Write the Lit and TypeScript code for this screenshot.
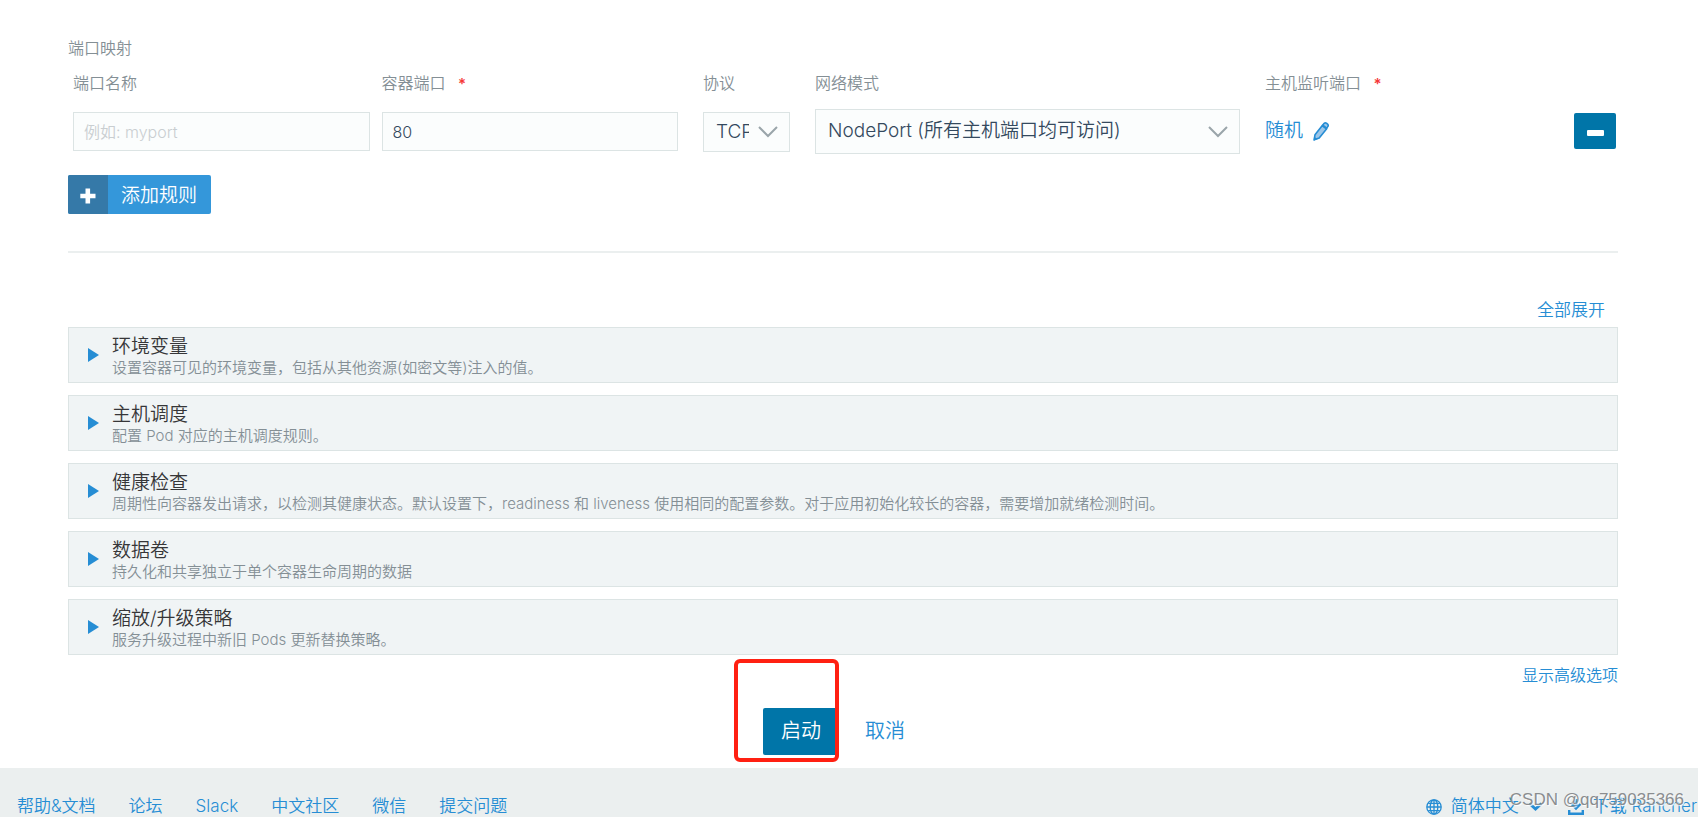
import { LitElement, html, css } from "lit";
import { customElement, property } from "lit/decorators.js";

const chevron = html`<svg class="chevron" width="20" height="12" viewBox="0 0 20 12" aria-hidden="true">
  <path d="M1 1 L10 10 L19 1" fill="none" stroke="#9aa5aa" stroke-width="2" />
</svg>`;

interface Section {
  title: string;
  detail: string;
}

const SECTIONS: Section[] = [
  { title: "环境变量", detail: "设置容器可见的环境变量，包括从其他资源(如密文等)注入的值。" },
  { title: "主机调度", detail: "配置 Pod 对应的主机调度规则。" },
  {
    title: "健康检查",
    detail:
      "周期性向容器发出请求，以检测其健康状态。默认设置下，readiness 和 liveness 使用相同的配置参数。对于应用初始化较长的容器，需要增加就绪检测时间。",
  },
  { title: "数据卷", detail: "持久化和共享独立于单个容器生命周期的数据" },
  { title: "缩放/升级策略", detail: "服务升级过程中新旧 Pods 更新替换策略。" },
];

const LINKS = ["帮助&文档", "论坛", "Slack", "中文社区", "微信", "提交问题"];

@customElement("accordion-item")
class AccordionItem extends LitElement {
  @property() heading = "";
  @property() detail = "";

  static styles = css`
    :host {
      display: block;
    }
    .panel {
      display: flex;
      align-items: center;
      gap: 13px;
      width: 100%;
      height: 56px;
      box-sizing: border-box;
      padding: 0 19px;
      border: 1px solid #dce4e4;
      background: #f0f4f5;
      font: inherit;
      text-align: left;
      cursor: pointer;
    }
    .arrow {
      flex: none;
    }
    .text {
      display: flex;
      flex-direction: column;
      min-width: 0;
      padding-top: 4px;
    }
    .title {
      font-size: 19px;
      line-height: 22px;
      color: #363638;
    }
    .detail {
      font-size: 15px;
      line-height: 20px;
      color: #848f95;
    }
  `;

  render() {
    return html`<button class="panel" type="button" aria-expanded="false">
      <svg class="arrow" width="11" height="14" viewBox="0 0 11 14" aria-hidden="true">
        <path d="M0 0 L11 7 L0 14Z" fill="#268dd4" />
      </svg>
      <span class="text">
        <span class="title">${this.heading}</span>
        <span class="detail">${this.detail}</span>
      </span>
    </button>`;
  }
}

@customElement("app-root")
class AppRoot extends LitElement {
  static styles = css`
    :host {
      display: block;
      background: #fff;
      color: #848f95;
      font-family: Inter, "Noto Sans CJK SC", sans-serif;
      font-weight: 350;
      font-size: 16px;
      line-height: 24px;
      overflow: hidden;
    }
    a {
      color: #268dd4;
      text-decoration: none;
    }
    button,
    input,
    select {
      font: inherit;
      margin: 0;
      box-sizing: border-box;
    }
    main {
      padding: 36px 80px 13px 68px;
    }
    h2 {
      margin: 0;
      font: inherit;
    }
    .rule {
      display: grid;
      grid-template-columns: minmax(0, 605fr) 87px minmax(0, 425fr) minmax(0, 284fr) 42px;
      grid-template-rows: 24px 45px;
      gap: 14px 25px;
      align-items: center;
      padding: 11px 2px 0 5px;
    }
    .pair {
      display: grid;
      grid-template-columns: 1fr 1fr;
      gap: 12px;
    }
    .required {
      color: #f53737;
      margin-left: 8px;
      font-weight: 600;
      font-size: 15px;
    }
    .field {
      width: 100%;
      height: 39px;
      padding: 0 10px;
      border: 1px solid #dce4e4;
      border-radius: 0;
      background: #fbfdfd;
      color: #34495e;
      font-size: 16px;
    }
    .field::placeholder {
      color: #c9ced1;
      opacity: 1;
    }
    .select {
      display: grid;
      align-items: center;
    }
    .select > * {
      grid-area: 1 / 1;
    }
    .select select {
      appearance: none;
      width: 100%;
      height: 45px;
      padding: 0 40px 1px 12px;
      border: 1px solid #dce4e4;
      border-radius: 0;
      background: #fbfdfd;
      color: #34495e;
      font-size: 19px;
    }
    .select .small {
      height: 40px;
      padding: 1px 40px 0 12px;
      text-overflow: clip;
      overflow: hidden;
    }
    .chevron {
      justify-self: end;
      margin-right: 12px;
      pointer-events: none;
    }
    .random {
      display: flex;
      align-items: center;
      gap: 10px;
      padding-bottom: 1px;
      font-size: 19px;
    }
    .remove {
      display: grid;
      place-items: center;
      width: 42px;
      height: 36px;
      margin-bottom: 2px;
      padding: 4px 0 0;
      border: 0;
      border-radius: 2px;
      background: #0075a8;
    }
    .add {
      display: flex;
      align-items: stretch;
      height: 39px;
      margin-top: 21px;
      padding: 0;
      border: 0;
      border-radius: 2px;
      overflow: hidden;
      background: #3497da;
      color: #fff;
      font-size: 19px;
      line-height: 42px;
    }
    .plus {
      display: grid;
      place-items: center;
      width: 40px;
      padding-top: 2px;
      box-sizing: border-box;
      background: #3579a8;
    }
    .label {
      padding: 0 14px 0 13px;
    }
    hr {
      height: 2px;
      margin: 37px 0 45px;
      border: 0;
      background: #ebefef;
    }
    .expand {
      display: flex;
      justify-content: flex-end;
      padding: 0 13px 5px 0;
      font-size: 17px;
    }
    .sections {
      display: grid;
      gap: 12px;
    }
    .advanced {
      display: flex;
      justify-content: flex-end;
      padding-top: 8px;
    }
    .actions {
      display: flex;
      justify-content: center;
      gap: 8px;
      padding-top: 21px;
      font-size: 20px;
      line-height: 47px;
    }
    .launch-wrap {
      position: relative;
    }
    .launch {
      display: block;
      height: 47px;
      padding: 0 18px;
      border: 0;
      border-radius: 2px;
      background: #0075a8;
      color: #fff;
    }
    .cancel {
      padding: 0 18px;
    }
    .highlight {
      position: absolute;
      right: 0;
      bottom: -7px;
      width: 105px;
      height: 103px;
      box-sizing: border-box;
      border: 4px solid #ff2012;
      border-radius: 6px;
      pointer-events: none;
    }
    footer {
      position: relative;
      display: flex;
      justify-content: space-between;
      padding: 28px 1px 0 17px;
      background: #ebefef;
      font-size: 17px;
      line-height: 21px;
      white-space: nowrap;
    }
    footer nav {
      display: flex;
      gap: 33px;
    }
    .tools {
      display: flex;
      gap: 25px;
    }
    .tools a {
      display: flex;
      align-items: center;
      gap: 9px;
    }
    .watermark {
      position: absolute;
      right: 14px;
      top: 21px;
      font-family: "Liberation Sans", sans-serif;
      font-weight: 400;
      color: #8a8d8f;
      text-shadow: 1px 1px 1px #fff;
    }
  `;

  render() {
    return html`
      <main>
        <h2>端口映射</h2>
        <div class="rule">
          <div class="pair">
            <label for="name">端口名称</label>
            <label for="port">容器端口 <span class="required">*</span></label>
          </div>
          <label for="proto">协议</label>
          <label for="mode">网络模式</label>
          <span>主机监听端口 <span class="required">*</span></span>
          <span></span>

          <div class="pair">
            <input id="name" class="field" type="text" placeholder="例如: myport" />
            <input id="port" class="field" type="text" .value=${"80"} />
          </div>
          <div class="select">
            <select id="proto" class="small"><option>TCP</option></select>
            ${chevron}
          </div>
          <div class="select">
            <select id="mode"><option>NodePort (所有主机端口均可访问)</option></select>
            ${chevron}
          </div>
          <a class="random" href="#">
            随机
            <svg width="16" height="19" viewBox="0 0 16 19" aria-hidden="true">
              <path d="M1.2 17.8 L2 12.7 L9.3 3.4 L13.7 6.8 L6.2 15.9Z" fill="#9cc6e9" stroke="#268dd4" stroke-width="1.6" stroke-linejoin="round" />
              <path d="M0.5 18.8 L1.1 14.6 L4.6 17.2Z" fill="#268dd4" />
              <path d="M9.6 3.2 L11.2 1.3 Q12.2 0.4 13.4 1.2 L14.6 2.2 Q15.7 3.2 14.9 4.4 L13.6 6.3Z" fill="#9cc6e9" stroke="#268dd4" stroke-width="1.6" stroke-linejoin="round" />
              <path d="M9.4 3.4 L13.7 6.7" stroke="#268dd4" stroke-width="2" />
            </svg>
          </a>
          <button class="remove" type="button" aria-label="删除">
            <svg width="17" height="6" viewBox="0 0 17 6"><rect width="17" height="6" rx="1" fill="#fff" /></svg>
          </button>
        </div>

        <button class="add" type="button">
          <span class="plus">
            <svg width="16" height="16" viewBox="0 0 16 16" aria-hidden="true">
              <path d="M5.5 0.5h4.6v5.2h5.4v4.6h-5.4v5.2h-4.6v-5.2H0.3V5.7h5.2Z" fill="#fff" />
            </svg>
          </span>
          <span class="label">添加规则</span>
        </button>

        <hr />

        <div class="expand"><a href="#">全部展开</a></div>
        <div class="sections">
          ${SECTIONS.map((s) => html`<accordion-item .heading=${s.title} .detail=${s.detail}></accordion-item>`)}
        </div>
        <div class="advanced"><a href="#">显示高级选项</a></div>

        <div class="actions">
          <div class="launch-wrap">
            <button class="launch" type="button">启动</button>
            <div class="highlight"></div>
          </div>
          <a class="cancel" href="#">取消</a>
        </div>
      </main>

      <footer>
        <nav>${LINKS.map((l) => html`<a href="#">${l}</a>`)}</nav>
        <div class="tools">
          <a href="#">
            <svg width="16" height="16" viewBox="0 0 16 16" fill="none" stroke="#268dd4" stroke-width="1.3" aria-hidden="true">
              <circle cx="8" cy="8" r="7.2" />
              <ellipse cx="8" cy="8" rx="3.8" ry="7.2" />
              <path d="M8 1v14M1 8h14M2.2 4.3h11.6M2.2 11.7h11.6" />
            </svg>
            简体中文
            <svg width="15" height="10" viewBox="0 0 15 10" aria-hidden="true">
              <path d="M1.5 1.5 L7.5 7 L13.5 1.5" fill="none" stroke="#268dd4" stroke-width="3" />
            </svg>
          </a>
          <a href="#">
            <svg width="16" height="16" viewBox="0 0 16 16" fill="none" stroke="#268dd4" aria-hidden="true">
              <path d="M8 0v9" stroke-width="3" />
              <path d="M3.5 5 L8 9.6 L12.5 5" stroke-width="2.4" />
              <path d="M1.2 11V14.7H14.8V11" stroke-width="2.4" />
            </svg>
            下载 Rancher
          </a>
        </div>
        <span class="watermark">CSDN @qq759035366</span>
      </footer>
    `;
  }
}
